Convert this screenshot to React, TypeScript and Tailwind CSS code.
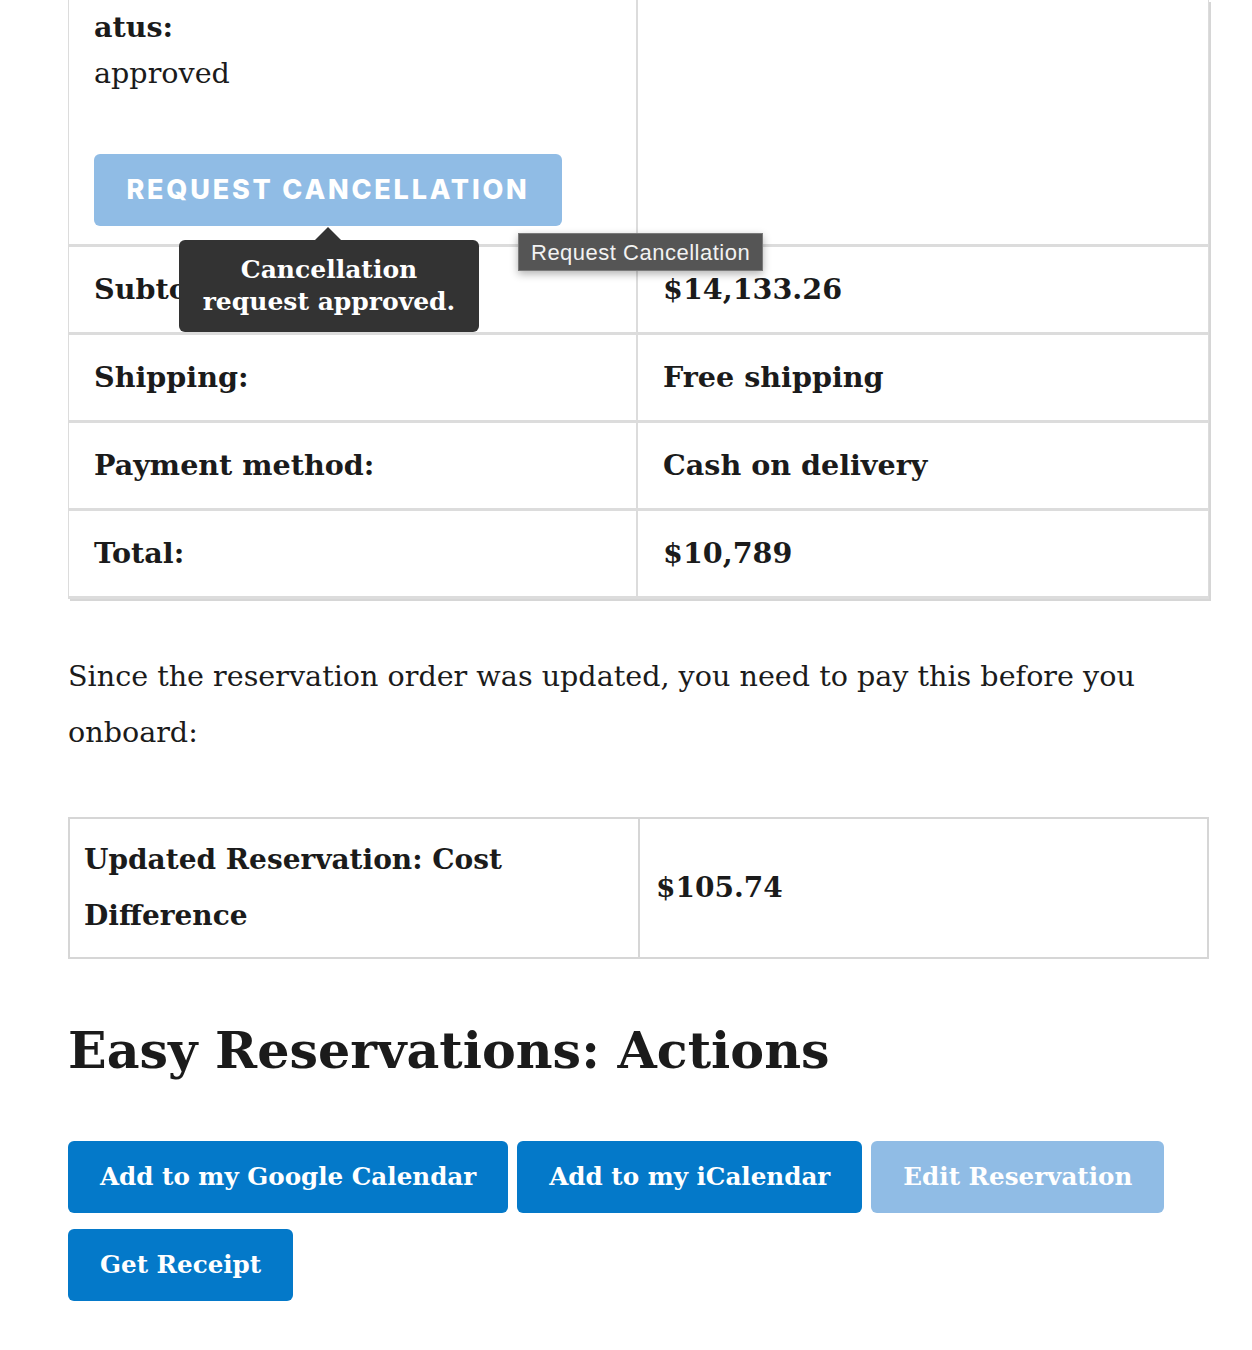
import type { ReactNode } from "react";

const serif = "font-['DejaVu_Serif',_'Liberation_Serif',_serif]";

type RowProps = {
  label: string;
  value: string;
  children?: ReactNode;
};

function SummaryRow({ label, value, children }: RowProps) {
  return (
    <div className="relative grid grid-cols-[569px_1fr] h-[88px] border-b-[3px] border-[#dcdcdc]">
      <div className="flex items-center pl-[25px] border-r-2 border-[#dcdcdc] font-bold text-[28.6px]">
        {label}
      </div>
      <div className="flex items-center pl-[25px] font-bold text-[28.6px]">
        {value}
      </div>
      {children}
    </div>
  );
}

function App() {
  const actions = [
    { label: "Add to my Google Calendar", disabled: false },
    { label: "Add to my iCalendar", disabled: false },
    { label: "Edit Reservation", disabled: true },
    { label: "Get Receipt", disabled: false },
  ];

  return (
    <main className={`w-[1252px] min-h-[1350px] bg-white text-[#1b1b1b] ${serif}`}>
      <div className="ml-[68px] w-[1141px]">
        {/* order summary table */}
        <section className="border-x border-[#dcdcdc] shadow-[2px_2px_0_#d6d6d6]">
          <div className="grid grid-cols-[569px_1fr] h-[247px] border-b-[3px] border-[#dcdcdc]">
            <div className="flex flex-col pl-[25px] border-r-2 border-[#dcdcdc]">
              <p className="font-bold text-[28.6px] leading-[46px] mt-[4px]">atus:</p>
              <p className="text-[28.6px] leading-[46px]">approved</p>
              <button className="mt-[58px] w-[468px] h-[72px] rounded-md bg-[#90bce5] text-white font-['Inter',_sans-serif] font-extrabold text-[27px] tracking-[2.8px]">
                REQUEST CANCELLATION
              </button>
            </div>
            <div />
          </div>

          <SummaryRow label="Subtotal:" value="$14,133.26">
            {/* validation bubble */}
            <div className="absolute left-[110px] top-[-7px] w-[300px] h-[92px] rounded-md bg-[#333333] text-white font-bold text-[25px] leading-[32px] flex flex-col items-center justify-center text-center">
              <span className="absolute top-[-13px] left-[136px] w-0 h-0 border-x-[13px] border-x-transparent border-b-[13px] border-b-[#333333]" />
              <span>Cancellation</span>
              <span>request approved.</span>
            </div>
            {/* native title tooltip */}
            <div className="absolute left-[449px] top-[-14px] h-[38px] px-[12px] flex items-center bg-[#555555] border border-[#7a7a7a] text-[#f2f2f2] font-['Liberation_Sans',_sans-serif] text-[22px] tracking-[0.5px] shadow-[0_3px_8px_rgba(0,0,0,0.3)]">
              Request Cancellation
            </div>
          </SummaryRow>
          <SummaryRow label="Shipping:" value="Free shipping" />
          <SummaryRow label="Payment method:" value="Cash on delivery" />
          <SummaryRow label="Total:" value="$10,789" />
        </section>

        <p className="mt-[49px] text-[28.6px] leading-[56px]">
          Since the reservation order was updated, you need to pay this before you
          onboard:
        </p>

        {/* cost difference */}
        <section className="mt-[57px] grid grid-cols-[570px_1fr] border-2 border-[#d6d6d6] h-[142px]">
          <div className="flex items-center px-[14px] border-r-2 border-[#d6d6d6] font-bold text-[28px] leading-[56px]">
            Updated Reservation: Cost Difference
          </div>
          <div className="flex items-center px-[16px] font-bold text-[28px]">
            $105.74
          </div>
        </section>

        <h2 className="mt-[51px] font-bold text-[50.7px] leading-[80px]">
          Easy Reservations: Actions
        </h2>

        <div className="mt-[51px] flex flex-wrap gap-x-[9px] gap-y-[16px] w-[1120px]">
          {actions.map((action) => (
            <button
              key={action.label}
              className={`h-[72px] px-[32px] rounded-md font-bold text-[24.6px] text-white ${
                action.disabled ? "bg-[#90bce5]" : "bg-[#0479c9]"
              }`}
            >
              {action.label}
            </button>
          ))}
        </div>
      </div>
    </main>
  );
}

export default App;
